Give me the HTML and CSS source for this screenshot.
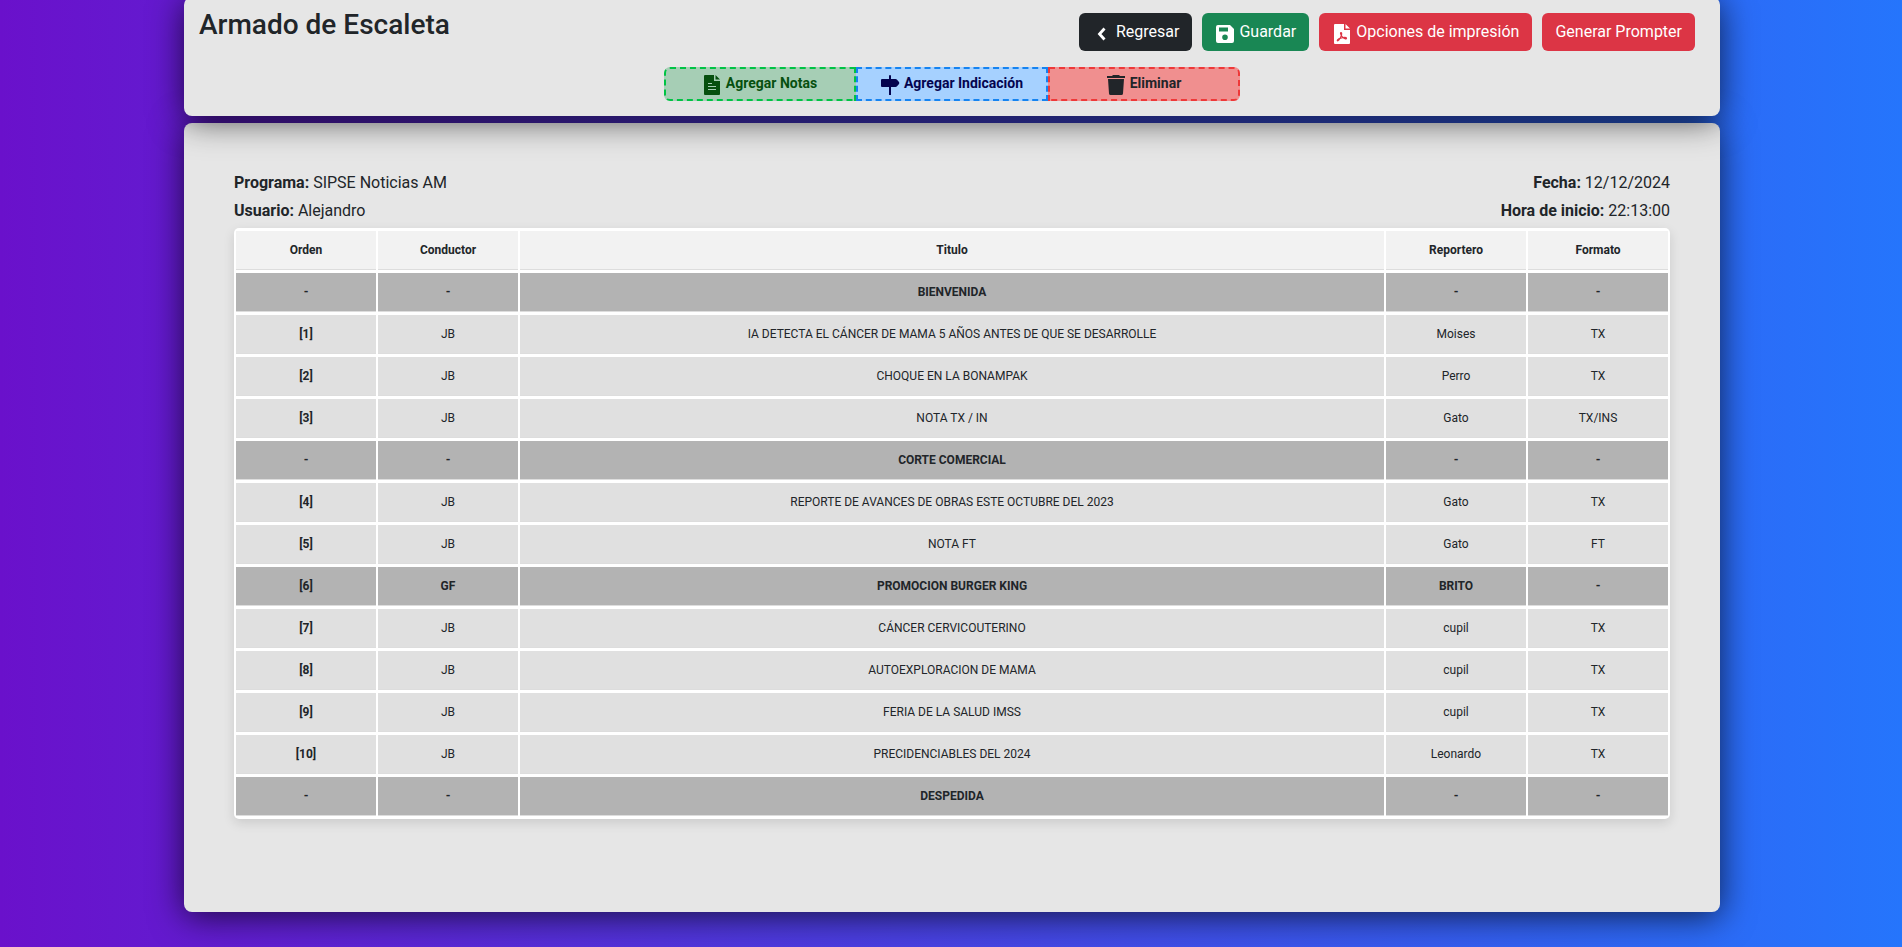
FILE: index.html
```html
<!DOCTYPE html>
<html lang="es">
<head>
<meta charset="utf-8">
<title>Armado de Escaleta</title>
<link rel="stylesheet" href="styles.css">
</head>
<body>
<div class="page">
  <header class="panel toolbar">
    <div class="toolbar-top">
      <h1 class="title">Armado de Escaleta</h1>
      <div class="actions">
        <button type="button" class="btn btn-dark"><svg class="icon" viewBox="0 0 24 24" aria-hidden="true"><path d="M14.500 6.500l-5 5.500 5 5.500" fill="none" stroke="currentColor" stroke-width="2.800"/></svg>Regresar</button>
        <button type="button" class="btn btn-green"><svg class="icon" viewBox="0 0 24 24" aria-hidden="true"><path fill="currentColor" fill-rule="evenodd" d="M5 3h12l4 4v12a2 2 0 0 1-2 2H5a2 2 0 0 1-2-2V5a2 2 0 0 1 2-2zm1 2.500v4h9v-4zm6 7a2.800 2.800 0 1 0 0 5.600 2.800 2.800 0 0 0 0-5.600z"/></svg>Guardar</button>
        <button type="button" class="btn btn-red"><svg class="icon" viewBox="0 0 24 24" aria-hidden="true"><path fill="currentColor" d="M5 2h9v6h6v13a1 1 0 0 1-1 1H5a1 1 0 0 1-1-1V3a1 1 0 0 1 1-1zM15.500 2l4.500 4.500h-4.500z"/><path d="M11 10.500c1.200 0 .6 2.800-.4 4.800s-2.300 3.900-3.100 3.500c-.9-.6 1.200-2.100 3.200-2.700 2.500-.8 5.800-1 5.800.2s-2.700.3-4-1.200-2.700-4.600-1.500-4.600z" fill="none" stroke="#dc3545" stroke-width="1.200"/></svg>Opciones de impresión</button>
        <button type="button" class="btn btn-red">Generar Prompter</button>
      </div>
    </div>
    <div class="tools">
      <button type="button" class="tool tool-note"><svg class="icon" viewBox="0 0 24 24" aria-hidden="true"><path fill="currentColor" d="M5 2h9v6h6v13a1 1 0 0 1-1 1H5a1 1 0 0 1-1-1V3a1 1 0 0 1 1-1zM15.500 2l4.500 4.500h-4.500z"/><path fill="none" stroke="#a6ceb5" d="M8 10.500h4M8 13.500h8M8 16.500h8"/></svg>Agregar Notas</button>
      <button type="button" class="tool tool-cue"><svg class="icon" viewBox="0 0 24 24" aria-hidden="true"><path fill="currentColor" d="M11 3a1 1 0 0 1 2 0v3h4.500q1 0 1.500.7l2 2.300q.6 1 0 2l-2 2.300q-.5.700-1.500.7H13v8h-2v-8H4a1 1 0 0 1-1-1V7a1 1 0 0 1 1-1h7z"/></svg>Agregar Indicación</button>
      <button type="button" class="tool tool-delete"><svg class="icon" viewBox="0 0 24 24" aria-hidden="true"><path fill="currentColor" d="M9 2h6l1 1h5v2H3V3h5zM4 6h16l-1 14.500a1.600 1.600 0 0 1-1.600 1.500H6.600A1.600 1.600 0 0 1 5 20.500z"/></svg>Eliminar</button>
    </div>
  </header>
  <main class="panel sheet">
    <div class="meta">
      <div class="meta-col">
        <p><b>Programa:</b> SIPSE Noticias AM</p>
        <p><b>Usuario:</b> Alejandro</p>
      </div>
      <div class="meta-col meta-right">
        <p><b>Fecha:</b> 12/12/2024</p>
        <p><b>Hora de inicio:</b> 22:13:00</p>
      </div>
    </div>
    <table class="rundown">
      <colgroup><col class="col-narrow"><col class="col-narrow"><col><col class="col-narrow"><col class="col-narrow"></colgroup>
      <thead><tr><th scope="col">Orden</th><th scope="col">Conductor</th><th scope="col">Titulo</th><th scope="col">Reportero</th><th scope="col">Formato</th></tr></thead>
      <tbody>
        <tr class="cue"><th scope="row">-</th><td>-</td><td>BIENVENIDA</td><td>-</td><td>-</td></tr>
        <tr><th scope="row">[1]</th><td>JB</td><td>IA DETECTA EL CÁNCER DE MAMA 5 AÑOS ANTES DE QUE SE DESARROLLE</td><td>Moises</td><td>TX</td></tr>
        <tr><th scope="row">[2]</th><td>JB</td><td>CHOQUE EN LA BONAMPAK</td><td>Perro</td><td>TX</td></tr>
        <tr><th scope="row">[3]</th><td>JB</td><td>NOTA TX / IN</td><td>Gato</td><td>TX/INS</td></tr>
        <tr class="cue"><th scope="row">-</th><td>-</td><td>CORTE COMERCIAL</td><td>-</td><td>-</td></tr>
        <tr><th scope="row">[4]</th><td>JB</td><td>REPORTE DE AVANCES DE OBRAS ESTE OCTUBRE DEL 2023</td><td>Gato</td><td>TX</td></tr>
        <tr><th scope="row">[5]</th><td>JB</td><td>NOTA FT</td><td>Gato</td><td>FT</td></tr>
        <tr class="cue"><th scope="row">[6]</th><td>GF</td><td>PROMOCION BURGER KING</td><td>BRITO</td><td>-</td></tr>
        <tr><th scope="row">[7]</th><td>JB</td><td>CÁNCER CERVICOUTERINO</td><td>cupil</td><td>TX</td></tr>
        <tr><th scope="row">[8]</th><td>JB</td><td>AUTOEXPLORACION DE MAMA</td><td>cupil</td><td>TX</td></tr>
        <tr><th scope="row">[9]</th><td>JB</td><td>FERIA DE LA SALUD IMSS</td><td>cupil</td><td>TX</td></tr>
        <tr><th scope="row">[10]</th><td>JB</td><td>PRECIDENCIABLES DEL 2024</td><td>Leonardo</td><td>TX</td></tr>
        <tr class="cue"><th scope="row">-</th><td>-</td><td>DESPEDIDA</td><td>-</td><td>-</td></tr>
      </tbody>
    </table>
  </main>
</div>
</body>
</html>
```

FILE: styles.css
```css
* { box-sizing: border-box; }
html { min-height: 100%; background: linear-gradient(to right, #6a11cb, #2575fc); }
body { margin: 0; font-family: Roboto, "Liberation Sans", sans-serif; font-size: 16px; line-height: 24px; color: #212529; }
h1, p { margin: 0; }
.page { display: flex; flex-direction: column; gap: 7px; margin-top: -3px; padding: 0 182px 35px 184px; }
.panel { background: #e6e6e6; border-radius: 8px; box-shadow: 0 4px 34px rgba(0, 0, 0, 0.7); }
.toolbar { position: relative; z-index: 1; padding: 8px 25px 15px 15px; }
.toolbar-top { display: flex; justify-content: space-between; align-items: flex-start; }
.title { font-size: 28px; line-height: 34px; font-weight: 500; padding-top: 3px; }
.actions { display: flex; gap: 10px; padding-top: 8px; }
.btn { display: flex; align-items: center; gap: 2px; padding: 6px 12px; border: 1px solid transparent; border-radius: 6px; font: inherit; color: #fff; cursor: pointer; }
.btn-dark { background: #212529; }
.btn-green { background: #198754; }
.btn-red { background: #dc3545; }
.icon { width: 24px; height: 24px; flex: none; }
.btn .icon { margin: 2px 0 -2px -2px; }
.tools { display: flex; justify-content: center; padding: 16px 0 0 10px; }
.tool { display: flex; align-items: center; justify-content: center; width: 192px; height: 34px; padding: 0 3px 2px 0; gap: 2px; border: 2px dashed; font: 700 14px/20px Roboto, sans-serif; cursor: pointer; }
.tool .icon { margin-top: 4px; }
.tool-note { background: #a6ceb5; border-color: #00c344; border-radius: 6px 0 0 6px; color: #06500f; }
.tool-cue { background: #a6d1ff; border-color: #1583f0; color: #04044f; }
.tool-delete { background: #f08f8f; border-color: #ee3838; border-radius: 0 6px 6px 0; color: #212529; }
.sheet { padding: 48px 50px 93px; }
.meta { display: flex; justify-content: space-between; padding-bottom: 5px; }
.meta-col { display: grid; gap: 4px; }
.meta-right { text-align: right; }
.meta b { font-weight: 700; }
.rundown { width: 100%; table-layout: fixed; border-collapse: separate; border-spacing: 2px 3px; background: #fff; border-radius: 5px; box-shadow: 0 4px 12px rgba(0, 0, 0, 0.12); font-size: 12px; line-height: 18px; text-align: center; }
.col-narrow { width: 140px; }
.rundown th, .rundown td { padding: 10px; background: #e0e0e0; border-bottom: 1px solid #ddd; }
.rundown thead th { background: #f2f2f2; }
.rundown .cue th, .rundown .cue td { background: #b3b3b3; font-weight: 700; }
```
